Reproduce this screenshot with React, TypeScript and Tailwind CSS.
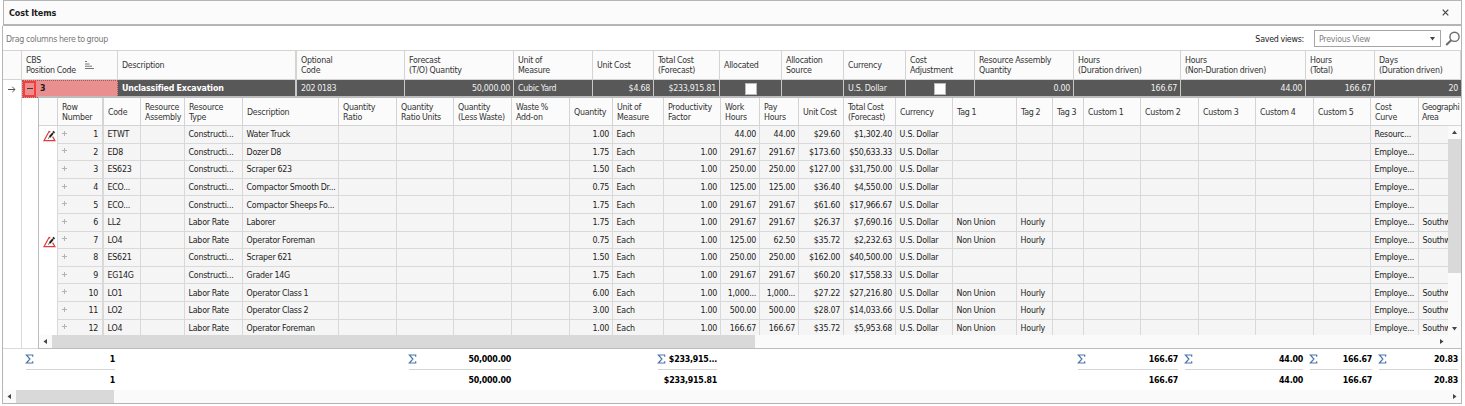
import React from 'react'
import clsx from 'clsx'

const COST_GRID =
  'grid grid-cols-[19px_96px_179px_108px_109px_79px_61px_66px_62px_62px_62px_69px_99px_107px_125px_69px_86px]'
const RESOURCE_GRID =
  'grid w-[1422px] grid-cols-[19px_46px_37px_44px_58px_96px_58px_57px_58px_58px_43px_51px_57px_39px_39px_45px_52px_57px_64px_36px_31px_57px_58px_57px_58px_57px_48px_42px]'

const costHeaders = [
  '',
  'CBS\nPosition Code',
  'Description',
  'Optional\nCode',
  'Forecast\n(T/O) Quantity',
  'Unit of\nMeasure',
  'Unit Cost',
  'Total Cost\n(Forecast)',
  'Allocated',
  'Allocation\nSource',
  'Currency',
  'Cost\nAdjustment',
  'Resource Assembly\nQuantity',
  'Hours\n(Duration driven)',
  'Hours\n(Non-Duration driven)',
  'Hours\n(Total)',
  'Days\n(Duration driven)',
]

const resourceHeaders = [
  '',
  'Row\nNumber',
  'Code',
  'Resource\nAssembly',
  'Resource\nType',
  'Description',
  'Quantity\nRatio',
  'Quantity\nRatio Units',
  'Quantity\n(Less Waste)',
  'Waste %\nAdd-on',
  'Quantity',
  'Unit of\nMeasure',
  'Productivity\nFactor',
  'Work\nHours',
  'Pay\nHours',
  'Unit Cost',
  'Total Cost\n(Forecast)',
  'Currency',
  'Tag 1',
  'Tag 2',
  'Tag 3',
  'Custom 1',
  'Custom 2',
  'Custom 3',
  'Custom 4',
  'Custom 5',
  'Cost\nCurve',
  'Geographi\nArea',
]

interface Resource {
  code: string
  type: string
  description: string
  quantity: string
  factor: string
  work: string
  pay: string
  unitCost: string
  total: string
  curve: string
  union?: boolean
  warning?: boolean
}

const resources: Resource[] = [
  { code: 'ETWT', type: 'Constructi...', description: 'Water Truck', quantity: '1.00', factor: '', work: '44.00', pay: '44.00', unitCost: '$29.60', total: '$1,302.40', curve: 'Resourc...', warning: true },
  { code: 'ED8', type: 'Constructi...', description: 'Dozer D8', quantity: '1.75', factor: '1.00', work: '291.67', pay: '291.67', unitCost: '$173.60', total: '$50,633.33', curve: 'Employe...' },
  { code: 'ES623', type: 'Constructi...', description: 'Scraper 623', quantity: '1.50', factor: '1.00', work: '250.00', pay: '250.00', unitCost: '$127.00', total: '$31,750.00', curve: 'Employe...' },
  { code: 'ECO...', type: 'Constructi...', description: 'Compactor Smooth Dr...', quantity: '0.75', factor: '1.00', work: '125.00', pay: '125.00', unitCost: '$36.40', total: '$4,550.00', curve: 'Employe...' },
  { code: 'ECO...', type: 'Constructi...', description: 'Compactor Sheeps Fo...', quantity: '1.75', factor: '1.00', work: '291.67', pay: '291.67', unitCost: '$61.60', total: '$17,966.67', curve: 'Employe...' },
  { code: 'LL2', type: 'Labor Rate', description: 'Laborer', quantity: '1.75', factor: '1.00', work: '291.67', pay: '291.67', unitCost: '$26.37', total: '$7,690.16', curve: 'Employe...', union: true },
  { code: 'LO4', type: 'Labor Rate', description: 'Operator Foreman', quantity: '0.75', factor: '1.00', work: '125.00', pay: '62.50', unitCost: '$35.72', total: '$2,232.63', curve: 'Employe...', union: true, warning: true },
  { code: 'ES621', type: 'Constructi...', description: 'Scraper 621', quantity: '1.50', factor: '1.00', work: '250.00', pay: '250.00', unitCost: '$162.00', total: '$40,500.00', curve: 'Employe...' },
  { code: 'EG14G', type: 'Constructi...', description: 'Grader 14G', quantity: '1.75', factor: '1.00', work: '291.67', pay: '291.67', unitCost: '$60.20', total: '$17,558.33', curve: 'Employe...' },
  { code: 'LO1', type: 'Labor Rate', description: 'Operator Class 1', quantity: '6.00', factor: '1.00', work: '1,000...', pay: '1,000...', unitCost: '$27.22', total: '$27,216.80', curve: 'Employe...', union: true },
  { code: 'LO2', type: 'Labor Rate', description: 'Operator Class 2', quantity: '3.00', factor: '1.00', work: '500.00', pay: '500.00', unitCost: '$28.07', total: '$14,033.66', curve: 'Employe...', union: true },
  { code: 'LO4', type: 'Labor Rate', description: 'Operator Foreman', quantity: '1.00', factor: '1.00', work: '166.67', pay: '166.67', unitCost: '$35.72', total: '$5,953.68', curve: 'Employe...', union: true },
]

// Summary values, keyed by cost column
const summaries: Record<number, [string, string]> = {
  1: ['1', '1'],
  4: ['50,000.00', '50,000.00'],
  7: ['$233,915...', '$233,915.81'],
  13: ['166.67', '166.67'],
  14: ['44.00', '44.00'],
  15: ['166.67', '166.67'],
  16: ['20.83', '20.83'],
}

const SortIcon = () => (
  <svg className="mr-[22px] h-[10px] w-[11px] shrink-0" viewBox="0 0 11 10" fill="none" stroke="#777">
    <path d="M1 1.5h2M1 4h4.5M1 6.2h7M1 8.5h9" />
  </svg>
)

const WarningIcon = () => (
  <svg className="h-[13px] w-[13px] shrink-0" viewBox="0 0 13 13" fill="none">
    <path d="M6.3 2 1 11.6h10.9L9.6 7.6M6.3 2l.9 1.3" stroke="#e23b3b" strokeWidth="1.2" />
    <path d="m6.6 8 3.4-3.8" stroke="#222" strokeWidth="2" />
    <path d="m10.2 3.8 1.1-1.2" stroke="#222" strokeWidth="2.2" />
    <path d="m5.5 9.5.8-1.3" stroke="#222" />
  </svg>
)

const SearchIcon = () => (
  <svg className="h-[16px] w-[16px]" viewBox="0 0 16 16" fill="none" stroke="#6a6a6a">
    <circle cx="9.5" cy="5.8" r="4.6" strokeWidth="1.4" />
    <path d="M6.2 9.2 1.2 14" strokeWidth="2" />
  </svg>
)

const SigmaIcon = () => (
  <svg className="-ml-px h-[10px] w-[9px] shrink-0" viewBox="0 0 9 10" fill="none" stroke="#4d76ab">
    <path d="M7.7 2.8V1H1.4l3.5 4-3.5 4h6.3V7.2" strokeWidth="1.2" />
  </svg>
)

const Arrow: React.FC<{ dir: 'left' | 'right' | 'up' | 'down' }> = ({ dir }) => {
  const paths = {
    left: 'M5 1v5L1.5 3.5z',
    right: 'M2 1v5l3.5-2.5z',
    up: 'M1 5h5L3.5 1.5z',
    down: 'M1 2h5L3.5 5.5z',
  }
  return (
    <svg className="h-[7px] w-[7px] shrink-0" viewBox="0 0 7 7" fill="#444">
      <path d={paths[dir]} />
    </svg>
  )
}

const HeaderCell: React.FC<{ label: string; children?: React.ReactNode; wide?: boolean; last?: boolean }> = ({ label, children, wide, last }) => (
  <div
    className={clsx(
      'flex items-center justify-between overflow-hidden border-[#d4d4d4] bg-[#fbfbfb] leading-[10px] whitespace-pre text-[#333]',
      wide ? 'border-r-2' : last ? 'border-r-0' : 'border-r',
      last ? 'pl-[3px] tracking-[-0.45px]' : 'pl-1'
    )}
  >
    <span>{label}</span>
    {children}
  </div>
)

const DarkCell: React.FC<{ children?: React.ReactNode; className?: string }> = ({ children, className }) => (
  <div className={clsx('flex items-center overflow-hidden border-r border-[#c9c9c9] bg-[#585858] pr-[3px] pb-[2px] pl-1 whitespace-pre text-[#f0f0f0]', className)}>
    {children}
  </div>
)

const Cell: React.FC<{ children?: React.ReactNode; right?: boolean }> = ({ children, right }) => (
  <div
    className={clsx(
      'flex items-center overflow-hidden border-r border-b border-[#d9d9d9] bg-[#f5f5f5] pr-[3px] pl-[3.6px] whitespace-pre',
      right && 'justify-end'
    )}
  >
    {children}
  </div>
)

const Checkbox = () => <span className="mt-[2px] mr-px h-3 w-3 border border-[#bbb] bg-white" />

const ResourceRow: React.FC<{ item: Resource; index: number }> = ({ item, index }) => (
  <div className={clsx(RESOURCE_GRID, 'h-[17.6px] shrink-0')}>
    <div className="flex items-center justify-center border-r border-[#d9d9d9] bg-white pt-[2px] pl-[2px]">{item.warning && <WarningIcon />}</div>
    <div className="flex items-center justify-between overflow-hidden border-r-2 border-b border-[#d9d9d9] bg-[#f5f5f5] pr-[4px] pl-[4px]">
      <svg className="mb-[2px] h-[5px] w-[5px]" viewBox="0 0 5 5" stroke="#b3b3b3">
        <path d="M2.5 0v5M0 2.5h5" />
      </svg>
      <span>{index + 1}</span>
    </div>
    <Cell>{item.code}</Cell>
    <Cell />
    <Cell>{item.type}</Cell>
    <Cell>{item.description}</Cell>
    <Cell />
    <Cell />
    <Cell />
    <Cell />
    <Cell right>{item.quantity}</Cell>
    <Cell>Each</Cell>
    <Cell right>{item.factor}</Cell>
    <Cell right>{item.work}</Cell>
    <Cell right>{item.pay}</Cell>
    <Cell right>{item.unitCost}</Cell>
    <Cell right>{item.total}</Cell>
    <Cell>U.S. Dollar</Cell>
    <Cell>{item.union && 'Non Union'}</Cell>
    <Cell>{item.union && 'Hourly'}</Cell>
    <Cell />
    <Cell />
    <Cell />
    <Cell />
    <Cell />
    <Cell />
    <Cell>{item.curve}</Cell>
    <Cell>{item.union && 'Southw'}</Cell>
  </div>
)

const App: React.FC = () => {
  return (
    <div className="h-[406px] w-[1465px] overflow-hidden bg-white pl-[2px] font-['DejaVu_Sans_Condensed','DejaVu_Sans',sans-serif] text-[8.8px] leading-[10px] tracking-[-0.25px] text-[#1c1c1c] [font-stretch:condensed] [word-spacing:-0.35px]">
      <div className="flex h-[404px] w-[1461px] flex-col">
        {/* Title bar */}
        <div className="ml-px flex h-[26px] w-[1459px] shrink-0 items-center justify-between border border-b-2 border-[#b5b5b5] bg-[#fbfbfb] pr-[12px] pl-[5px]">
          <span className="text-[9px] font-bold tracking-[-0.1px]">Cost Items</span>
          <svg className="h-[7px] w-[7px]" viewBox="0 0 7 7" stroke="#444" strokeWidth="1.2">
            <path d="m.7.7 5.6 5.6M6.3.7.7 6.3" />
          </svg>
        </div>

        <div className="flex min-h-0 w-[1460px] flex-1 flex-col border-x border-b border-[#b5b5b5]">
          {/* Group panel */}
          <div className="flex h-[24px] shrink-0 items-center pt-px pl-[3px]">
            <span className="tracking-[-0.3px] text-[#777]">Drag columns here to group</span>
            <span className="ml-auto">Saved views:</span>
            <div className="ml-[10px] flex h-[17px] w-[127px] items-center justify-between border border-[#a5a5a5] bg-white pr-[4px] pl-[4px] text-[#808080]">
              Previous View
              <Arrow dir="down" />
            </div>
            <div className="ml-[4px] w-[16px]">
              <SearchIcon />
            </div>
          </div>

          {/* Cost item header */}
          <div className={clsx(COST_GRID, 'h-[30px] shrink-0 border-y border-[#d4d4d4]')}>
            {costHeaders.map((label, i) => (
              <HeaderCell key={i} label={label} wide={i === 2}>
                {i === 1 && <SortIcon />}
              </HeaderCell>
            ))}
          </div>

          {/* Cost item row */}
          <div className={clsx(COST_GRID, 'h-[16px] shrink-0')}>
            <div className="flex items-center justify-center border-r border-[#d4d4d4] bg-white">
              <svg className="h-[7px] w-[8px]" viewBox="0 0 8 7" fill="none" stroke="#555">
                <path d="M0 3.5h7M4.3.8 7 3.5 4.3 6.2" />
              </svg>
            </div>
            <div className="flex items-center border border-dotted border-[#a05a5a] bg-[#ea8f8f] font-bold">
              <span className="flex h-4 w-[13px] shrink-0 items-start justify-center border-2 border-[#fb3b3b] pt-[5px]">
                <span className="h-px w-[6px] bg-[#553030]" />
              </span>
              <span className="mb-[2px] ml-[4px]">3</span>
            </div>
            <DarkCell className="border-r-2 font-bold tracking-[-0.15px] text-white">Unclassified Excavation</DarkCell>
            <DarkCell>202 0183</DarkCell>
            <DarkCell className="justify-end">50,000.00</DarkCell>
            <DarkCell>Cubic Yard</DarkCell>
            <DarkCell className="justify-end">$4.68</DarkCell>
            <DarkCell className="justify-end">$233,915.81</DarkCell>
            <DarkCell className="justify-center">
              <Checkbox />
            </DarkCell>
            <DarkCell />
            <DarkCell>U.S. Dollar</DarkCell>
            <DarkCell className="justify-center">
              <Checkbox />
            </DarkCell>
            <DarkCell className="justify-end">0.00</DarkCell>
            <DarkCell className="justify-end">166.67</DarkCell>
            <DarkCell className="justify-end">44.00</DarkCell>
            <DarkCell className="justify-end">166.67</DarkCell>
            <DarkCell className="justify-end border-r-0 pr-0">20</DarkCell>
          </div>

          {/* Resource detail */}
          <div className="flex h-[253px] shrink-0">
            <div className="w-[19px] shrink-0 border-r border-b border-[#d9d9d9]" />
            <div className="w-[16px] shrink-0 border-b border-[#d9d9d9]" />
            <div className="flex w-[1423px] shrink-0 flex-col border-t-2 border-b border-l border-[#bcbcbc]">
              <div className={clsx(RESOURCE_GRID, 'h-[28px] shrink-0 border-b border-[#d4d4d4]')}>
                {resourceHeaders.map((label, i) => (
                  <HeaderCell key={i} label={label} wide={i === 1} last={i === resourceHeaders.length - 1} />
                ))}
              </div>
              <div className="flex h-[209px] shrink-0">
                <div className="flex w-[1409px] flex-col overflow-hidden">
                  {resources.map((item, i) => (
                    <ResourceRow key={i} item={item} index={i} />
                  ))}
                </div>
                <div className="flex w-[13px] flex-col items-center bg-[#fafafa]">
                  <div className="flex h-[13px] items-center">
                    <Arrow dir="up" />
                  </div>
                  <div className="h-[134px] w-full bg-[#d9d9d9]" />
                  <div className="mt-auto flex h-[13px] items-center">
                    <Arrow dir="down" />
                  </div>
                </div>
              </div>
              <div className="flex flex-1 items-center bg-[#fafafa]">
                <div className="flex w-[13px] justify-center">
                  <Arrow dir="left" />
                </div>
                <div className="h-full w-[703px] bg-[#d9d9d9]" />
                <div className="mr-[16px] ml-auto">
                  <Arrow dir="right" />
                </div>
              </div>
            </div>
          </div>

          {/* Summaries */}
          <div className={clsx(COST_GRID, 'h-[41px] shrink-0 font-bold tracking-[-0.22px] text-black')}>
            {costHeaders.map((_, i) => (
              <div key={i} className="pr-[3px] pl-1">
                {summaries[i] && (
                  <>
                    <div className="flex h-[21px] items-center justify-between border-b border-[#d4d4d4]">
                      <SigmaIcon />
                      <span>{summaries[i][0]}</span>
                    </div>
                    <div className="flex h-[20px] items-center justify-end">{summaries[i][1]}</div>
                  </>
                )}
              </div>
            ))}
          </div>

          <div className="flex flex-1 items-center bg-[#fafafa]">
            <div className="flex w-[13px] justify-center">
              <Arrow dir="left" />
            </div>
            <div className="h-full w-[98px] bg-[#d9d9d9]" />
            <div className="mr-[3px] ml-auto">
              <Arrow dir="right" />
            </div>
          </div>
        </div>
      </div>
    </div>
  )
}

export default App
